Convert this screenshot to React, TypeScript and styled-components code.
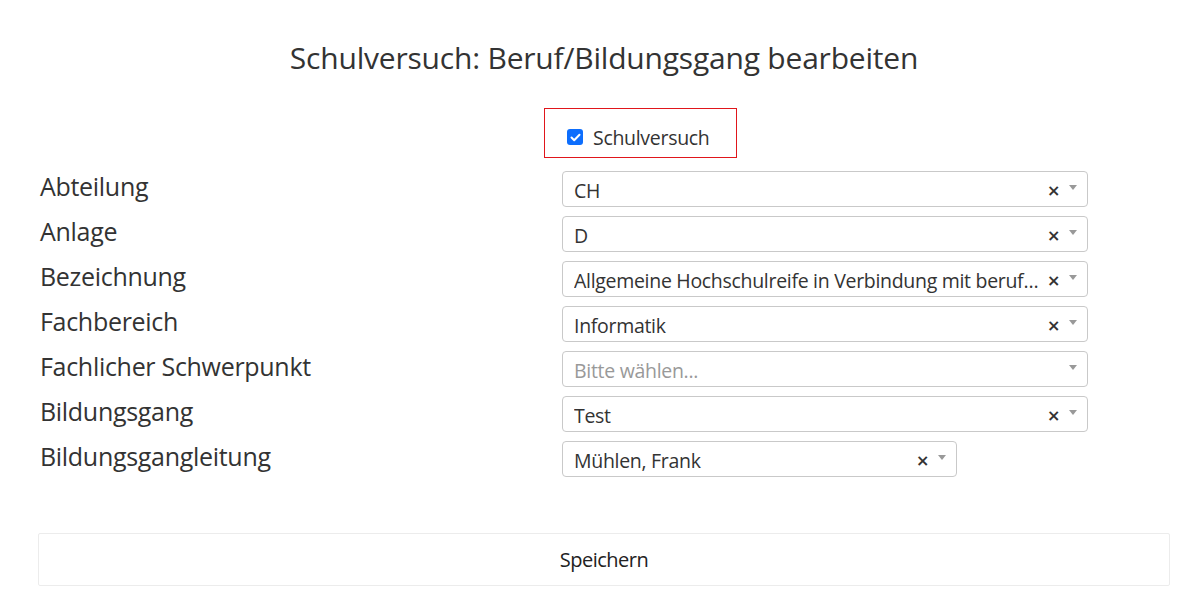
import React from "react";
import styled, { createGlobalStyle } from "styled-components";

const GlobalStyle = createGlobalStyle`
  body {
    margin: 0;
    background: #fff;
    font-family: "Open Sans", "Noto Sans", sans-serif;
    color: #212529;
  }
`;

const Page = styled.div`
  padding: 37px 31px 0 38px;
  display: flex;
  flex-direction: column;
`;

const Title = styled.h1`
  margin: 0;
  text-align: center;
  font-size: 30px;
  font-weight: 400;
  letter-spacing: -0.2px;
  line-height: 42px;
  color: #333;
`;

const CheckRow = styled.div`
  display: flex;
  padding-left: 506px;
  margin-top: 29px;
`;

const CheckBox = styled.label`
  display: flex;
  align-items: center;
  gap: 10px;
  width: 193px;
  height: 50px;
  box-sizing: border-box;
  border: 1px solid #e0161b;
  padding: 8px 0 0 22px;
  font-size: 19.5px;
  color: #333;
  letter-spacing: -0.3px;
`;

const Tick = styled.span`
  width: 16px;
  height: 16px;
  border-radius: 3px;
  background: #0d6efd;
  display: flex;
  align-items: center;
  justify-content: center;
`;

const Form = styled.div`
  display: grid;
  grid-template-columns: 524px 526px;
  row-gap: 9px;
  margin-top: 13px;
`;

const Label = styled.div`
  font-size: 25px;
  line-height: 30px;
  color: #333;
  letter-spacing: -0.3px;
  padding-left: 2px;
`;

const Select = styled.div<{ $narrow?: boolean }>`
  width: ${(p) => (p.$narrow ? "395px" : "526px")};
  height: 36px;
  box-sizing: border-box;
  border: 1px solid #c9c9c9;
  border-radius: 4px;
  display: flex;
  align-items: center;
  padding: 3px 10px 0 11px;
  font-size: 19.5px;
  color: #333;
  letter-spacing: -0.3px;
`;

const Value = styled.span<{ $placeholder?: boolean }>`
  flex: 1;
  min-width: 0;
  white-space: nowrap;
  overflow: hidden;
  text-overflow: ellipsis;
  color: ${(p) => (p.$placeholder ? "#999" : "#333")};
`;

const Clear = styled.span`
  font-family: "DejaVu Sans", sans-serif;
  font-size: 16px;
  font-weight: 700;
  color: #333;
  margin: 0 0 0 4px;
`;

const Arrow = styled.span`
  width: 0;
  height: 0;
  border-left: 4px solid transparent;
  border-right: 4px solid transparent;
  border-top: 5px solid #999;
  margin: -6px 0 0 9px;
`;

const SaveButton = styled.button`
  margin-top: 56px;
  height: 53px;
  width: 100%;
  background: #fff;
  border: 1px solid #ececec;
  border-radius: 2px;
  font-family: "Open Sans", "Noto Sans", sans-serif;
  font-size: 20px;
  color: #222;
  letter-spacing: -0.5px;
`;

const fields = [
  { label: "Abteilung", value: "CH" },
  { label: "Anlage", value: "D" },
  { label: "Bezeichnung", value: "Allgemeine Hochschulreife in Verbindung mit beruflichen Kenntnissen" },
  { label: "Fachbereich", value: "Informatik" },
  { label: "Fachlicher Schwerpunkt", value: "", placeholder: "Bitte wählen..." },
  { label: "Bildungsgang", value: "Test" },
  { label: "Bildungsgangleitung", value: "Mühlen, Frank", narrow: true },
];

export default function App() {
  return (
    <Page>
      <GlobalStyle />
      <Title>Schulversuch: Beruf/Bildungsgang bearbeiten</Title>
      <CheckRow>
        <CheckBox>
          <Tick>
            <svg width="11" height="9" viewBox="0 0 11 9">
              <path d="M1.5 4.5 L4.2 7.2 L9.5 1.8" fill="none" stroke="#fff" strokeWidth="2" strokeLinecap="round" strokeLinejoin="round" />
            </svg>
          </Tick>
          Schulversuch
        </CheckBox>
      </CheckRow>
      <Form>
        {fields.map((f) => (
          <React.Fragment key={f.label}>
            <Label>{f.label}</Label>
            <Select $narrow={f.narrow}>
              <Value $placeholder={!f.value}>{f.value || f.placeholder}</Value>
              {f.value && <Clear>×</Clear>}
              <Arrow />
            </Select>
          </React.Fragment>
        ))}
      </Form>
      <SaveButton>Speichern</SaveButton>
    </Page>
  );
}
